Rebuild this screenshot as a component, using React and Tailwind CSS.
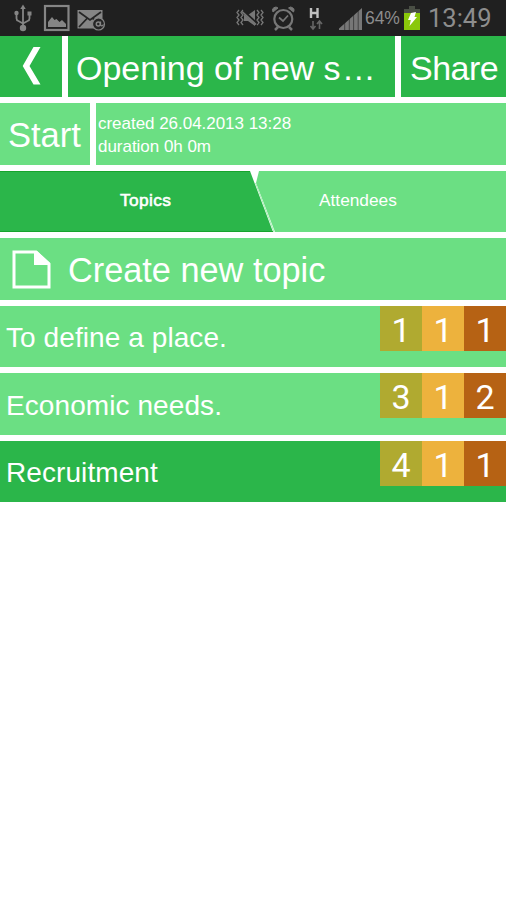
const topics = [
  { title: 'To define a place.', votes: [1, 1, 1] },
  { title: 'Economic needs.', votes: [3, 1, 2] },
  { title: 'Recruitment', votes: [4, 1, 1], active: true },
];

const voteColors = ['bg-[#b0aa30]', 'bg-[#edb23d]', 'bg-[#b66214]'];

function LeftStatusIcons() {
  return (
    <svg width="120" height="36" viewBox="0 0 120 36" className="block" fill="none" stroke="#858585">
      <g strokeWidth="1.8">
        <path d="M23 8v18M16.500 14v4.500q0 2 2 2.500l4.500 2.500 4.500-2.500q2-.5 2-2.500v-4" />
        <path d="M23 4.500l2.700 4.500h-5.400z" fill="#858585" stroke="none" />
        <circle cx="16.500" cy="13" r="2.200" fill="#858585" stroke="none" />
        <rect x="27.500" y="11.500" width="4" height="4" fill="#858585" stroke="none" />
        <circle cx="23" cy="28" r="3.200" fill="#858585" stroke="none" />
      </g>
      <rect x="45" y="6" width="23.500" height="24" strokeWidth="2.200" />
      <path d="M48 27v-5l4-5 2.500 3 2-1 3 3 2.500-2 4 4v3z" fill="#858585" stroke="none" />
      <rect x="77.500" y="10" width="25" height="18.500" fill="#858585" stroke="none" />
      <path d="M79 12l11 8 11-8M79 27l8-8.500M93 18.500l3 3" stroke="#252525" strokeWidth="1.800" />
      <circle cx="98.500" cy="24" r="6" fill="#252525" stroke="#858585" strokeWidth="1.200" />
      <circle cx="98.300" cy="24" r="2" strokeWidth="1.500" />
      <path d="M100.500 21.500v3.500q1.500 2 3-.500" strokeWidth="1.300" />
    </svg>
  );
}

function RightStatusIcons() {
  return (
    <svg width="128" height="36" viewBox="236 0 128 36" className="block" fill="none" stroke="#777">
      <path d="M239 10l-2 2.500 2 2.500-2 2.500 2 2.500-2 2.500 2 2.500M243 10l-2 2.500 2 2.500-2 2.500 2 2.500-2 2.500 2 2.500M257 10l2 2.500-2 2.500 2 2.500-2 2.500 2 2.500-2 2.500M261 10l2 2.500-2 2.500 2 2.500-2 2.500 2 2.500-2 2.500" strokeWidth="1.300" />
      <path d="M244 15h4l7-5v16l-7-5h-4z" fill="#777" stroke="none" />
      <path d="M243 11l14 13" stroke="#202020" strokeWidth="3" />
      <path d="M242 11.500l14 13" strokeWidth="1.700" />
      <circle cx="283.300" cy="19" r="9" strokeWidth="2.200" />
      <path d="M279 17.500l4 3.500 5-5.500" strokeWidth="1.700" />
      <path d="M273 12q-2-4 3-5l2 1zM293.500 12q2-4-3-5l-2 1z" fill="#777" strokeWidth="1" />
      <path d="M278 27l-3 3M289 27l3 3" strokeWidth="2.500" />
      <path d="M311 8v10M317.500 8v10M311 13h7" stroke="#c0c0c0" strokeWidth="2.400" />
      <path d="M313 21v8M310.500 26l2.500 3 2.500-3M319.500 29v-8M317 24l2.500-3 2.500 3" stroke="#666" strokeWidth="1.600" />
      <path d="M339 30v-1.500L362 8v22z" fill="#777" stroke="none" />
      <path d="M344.700 22v9M349.300 18v13M353.600 14v17M358.200 10v21" stroke="#202020" strokeWidth=".6" />
    </svg>
  );
}

function StatusBar() {
  return (
    <div className="flex h-9 items-center bg-[#202020] text-[#8d8d8d]">
      <LeftStatusIcons />
      <div className="ml-[116px] flex items-center">
        <RightStatusIcons />
        <span className="ml-px w-[38px] whitespace-nowrap text-[17.5px] leading-9 tracking-[-0.1px]">64%</span>
        <svg width="18" height="36" viewBox="0 0 18 36" className="block shrink-0">
          <path d="M6 6h6v3h5v5H1V9h5z" fill="#4a4f45" />
          <path d="M1 13h16v17H1z" fill="#8ac80a" />
          <path d="M8 13l5-1-1.500 5H14L6.500 26l1.300-6H5z" fill="#fff" />
        </svg>
        <span className="ml-[7px] whitespace-nowrap font-[Roboto,sans-serif] text-[25.5px] leading-9">13:49</span>
      </div>
    </div>
  );
}

function Tabs() {
  return (
    <div className="relative h-[61px]">
      <svg width="506" height="61" className="absolute inset-0 block">
        <path d="M259 0H506V61H275L256 12z" fill="#6bdf83" />
        <path d="M0 0H250L273 61H0z" fill="#2bb64a" />
        <path d="M0 .5H250M0 60.500H273" stroke="#16a52c" fill="none" />
        <path d="M255.500 12L274 61" stroke="#a5eeb3" fill="none" />
      </svg>
      <div className="relative flex h-full text-[17.3px] leading-[59px]">
        <span className="w-[248px] pl-[120px] tracking-[0.4px] [-webkit-text-stroke:0.6px_white]">Topics</span>
        <span className="pl-[71px]">Attendees</span>
      </div>
    </div>
  );
}

function TopicRow({ title, votes, active, tall }) {
  return (
    <div
      className={`flex items-start justify-between ${tall ? 'h-[62px]' : 'h-[61px]'} ${active ? 'bg-[#2bb64a]' : 'bg-[#6bdf83]'}`}
    >
      <span className={`whitespace-nowrap pl-[6px] text-[28px] tracking-[0.08px] ${tall ? 'leading-[65px]' : 'leading-[64px]'}`}>
        {title}
      </span>
      <div className="flex">
        {votes.map((vote, i) => (
          <span
            key={i}
            className={`h-[45px] w-[42px] text-center font-[Roboto,sans-serif] text-[34px] leading-[48px] ${voteColors[i]}`}
          >
            {vote}
          </span>
        ))}
      </div>
    </div>
  );
}

export default function App() {
  return (
    <div className="h-[900px] w-[506px] overflow-hidden bg-white font-['Liberation_Sans',Arial,sans-serif] text-white">
      <StatusBar />
      <main className="flex flex-col gap-[6px]">
        <header className="flex h-[61px] gap-[6px] text-[34px] leading-[65px]">
          <button className="flex w-[62px] items-center justify-center bg-[#2bb64a]" aria-label="Back">
            <svg width="62" height="61" className="block">
              <path d="M33.500 11h7L29.500 30l11 18.500h-7L22.700 30z" fill="#fff" />
            </svg>
          </button>
          <h1 className="w-[327px] whitespace-nowrap bg-[#2bb64a] pl-[8px]">
            Opening of new s<span className="ml-px">…</span>
          </h1>
          <button className="flex-1 whitespace-nowrap bg-[#2bb64a] pl-[9px] text-left tracking-[-0.5px]">Share</button>
        </header>
        <section className="flex h-[62px] gap-[6px]">
          <button className="w-[90px] bg-[#6bdf83] pl-[8px] text-left text-[34.5px] leading-[65px]">Start</button>
          <div className="flex-1 bg-[#6bdf83] pl-[2px] pt-[9px] text-[17px] leading-[23px] tracking-[-0.03px]">
            <p>created 26.04.2013 13:28</p>
            <p>duration 0h 0m</p>
          </div>
        </section>
        <Tabs />
        <button className="flex h-[62px] items-center bg-[#6bdf83] text-left">
          <svg width="68" height="62" className="block">
            <path d="M14 14H36L49 26V49H14z" fill="none" stroke="#fff" strokeWidth="3" />
            <path d="M34 13H37L50 25V27H34z" fill="#fff" />
          </svg>
          <span className="pt-px text-[34.3px] leading-[66px]">Create new topic</span>
        </button>
        {topics.map((topic, i) => (
          <TopicRow key={topic.title} {...topic} tall={i === 1} />
        ))}
      </main>
    </div>
  );
}
